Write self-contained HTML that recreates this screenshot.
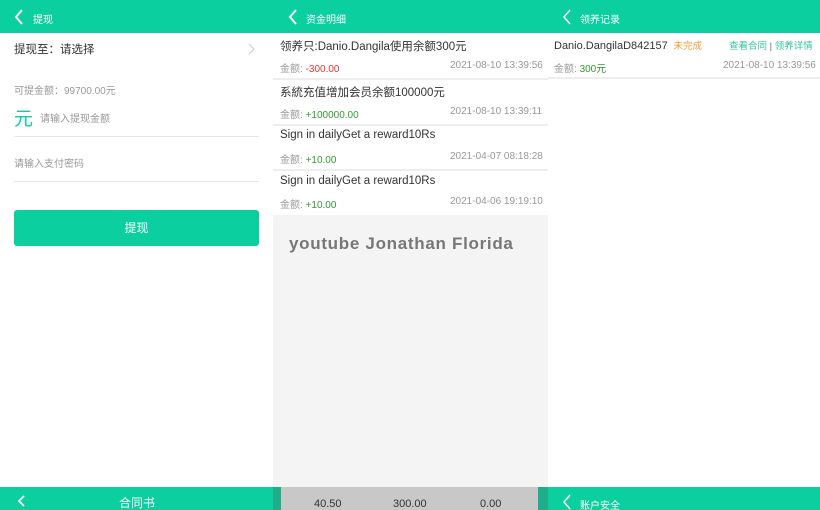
<!DOCTYPE html>
<html><head><meta charset="utf-8"><style>
*{margin:0;padding:0;box-sizing:border-box}
body{width:820px;height:510px;overflow:hidden;background:#fff;font-family:"Liberation Sans","Noto Sans CJK SC",sans-serif;position:relative}
.p{position:absolute;top:0;height:510px;overflow:hidden}
.hd{position:absolute;left:0;top:0;width:100%;height:33px;background:#0ccfa0;color:#fff;font-size:10px}
.hd svg{position:absolute;top:9px}
.hd span{position:absolute;top:11px}
.t{position:absolute;font-size:11.5px;color:#333;white-space:nowrap}
.g{color:#999;font-size:10px}
.line{position:absolute;height:1px;background:#e6e6e6}
</style></head><body>
<!-- panel 1 -->
<div class="p" style="left:0;width:273px">
 <div class="hd"><svg width="10" height="16" style="left:14px"><path d="M8 1 L2 8 L8 15" stroke="#fff" stroke-width="2" fill="none"/></svg><span style="left:33px">提现</span></div>
 <div class="t" style="left:14px;top:41px">提现至：请选择</div>
 <svg width="8" height="12" style="position:absolute;left:248px;top:43px"><path d="M1 1 L6 6 L1 11" stroke="#ccc" stroke-width="1" fill="none"/></svg>
 <div class="t g" style="left:14px;top:82px">可提金额：99700.00元</div>
 <div class="t" style="left:14px;top:104px;font-size:19px;color:#0ccfa0">元</div>
 <div class="t g" style="left:40px;top:110px">请输入提现金额</div>
 <div class="line" style="left:14px;top:136px;width:245px"></div>
 <div class="t g" style="left:14px;top:155px">请输入支付密码</div>
 <div class="line" style="left:14px;top:181px;width:245px"></div>
 <div style="position:absolute;left:14px;top:210px;width:245px;height:36px;background:#0ccfa0;border-radius:3px;color:#fff;font-size:12px;text-align:center;line-height:36px">提现</div>
 <div style="position:absolute;left:0;top:487px;width:273px;height:23px;background:#0ccfa0"></div>
 <svg width="8" height="12" style="position:absolute;left:18px;top:495px"><path d="M6 1 L1 6 L6 11" stroke="#fff" stroke-width="1.8" fill="none"/></svg>
 <div class="t" style="left:119px;top:494px;color:#fff;font-size:12px">合同书</div>
</div>
<!-- panel 2 -->
<div class="p" style="left:273px;width:275px;background:#f4f4f4">
 <div class="hd"><svg width="10" height="16" style="left:15px"><path d="M8 1 L2 8 L8 15" stroke="#fff" stroke-width="2" fill="none"/></svg><span style="left:33px">资金明细</span></div>
 <div style="position:absolute;left:0;top:33px;width:275px;height:182px;background:#fff"></div>
 <div class="line" style="left:0;top:78px;width:275px;background:#eee;height:2px"></div>
 <div class="line" style="left:0;top:124px;width:275px;background:#eee;height:2px"></div>
 <div class="line" style="left:0;top:169px;width:275px;background:#eee;height:2px"></div>
 <div class="t" style="left:7px;top:38px">领养只:Danio.Dangila使用余额300元</div>
 <div class="t g" style="left:7px;top:60px">金额: <span style="color:#e33">-300.00</span></div>
 <div class="t g" style="left:177px;top:60px">2021-08-10 13:39:56</div>
 <div class="t" style="left:7px;top:84px">系統充值增加会员余额100000元</div>
 <div class="t g" style="left:7px;top:106px">金额: <span style="color:#393">+100000.00</span></div>
 <div class="t g" style="left:177px;top:106px">2021-08-10 13:39:11</div>
 <div class="t" style="left:7px;top:129px">Sign in dailyGet a reward10Rs</div>
 <div class="t g" style="left:7px;top:151px">金额: <span style="color:#393">+10.00</span></div>
 <div class="t g" style="left:177px;top:151px">2021-04-07 08:18:28</div>
 <div class="t" style="left:7px;top:175px">Sign in dailyGet a reward10Rs</div>
 <div class="t g" style="left:7px;top:196px">金额: <span style="color:#393">+10.00</span></div>
 <div class="t g" style="left:177px;top:196px">2021-04-06 19:19:10</div>
 <div class="t" style="left:16px;top:234px;font-size:17px;font-weight:bold;color:#777;letter-spacing:0.7px">youtube Jonathan Florida</div>
 <div style="position:absolute;left:0;top:487px;width:8px;height:23px;background:#1eae8a"></div>
 <div style="position:absolute;left:8px;top:487px;width:257px;height:23px;background:#c8c8c8"></div>
 <div style="position:absolute;left:265px;top:487px;width:10px;height:23px;background:#1eae8a"></div>
 <div class="t" style="left:41px;top:498px;font-size:11px">40.50</div>
 <div class="t" style="left:120px;top:498px;font-size:11px">300.00</div>
 <div class="t" style="left:207px;top:498px;font-size:11px">0.00</div>
</div>
<!-- panel 3 -->
<div class="p" style="left:548px;width:272px">
 <div class="hd"><svg width="10" height="16" style="left:14px"><path d="M8 1 L2 8 L8 15" stroke="#fff" stroke-width="1.5" fill="none"/></svg><span style="left:32px">领养记录</span></div>
 <div class="t" style="left:6px;top:38px;font-size:11px">Danio.DangilaD842157 <span style="color:#f39c3c;font-size:9.5px">&nbsp;未完成</span></div>
 <div class="t" style="left:181px;top:38px;font-size:9.5px;color:#2cc79d">查看合同 <span style="color:#666">|</span> 领养详情</div>
 <div class="t g" style="left:6px;top:60px">金额: <span style="color:#393">300元</span></div>
 <div class="t g" style="left:175px;top:60px">2021-08-10 13:39:56</div>
 <div class="line" style="left:0;top:77px;width:272px;background:#eee;height:2px"></div>
 <div style="position:absolute;left:0;top:487px;width:272px;height:23px;background:#0ccfa0"></div>
 <svg width="10" height="16" style="position:absolute;left:14px;top:494px"><path d="M8 1 L2 8 L8 15" stroke="#fff" stroke-width="1.5" fill="none"/></svg>
 <div class="t" style="left:32px;top:497px;color:#fff;font-size:10px">账户安全</div>
</div>
</body></html>
